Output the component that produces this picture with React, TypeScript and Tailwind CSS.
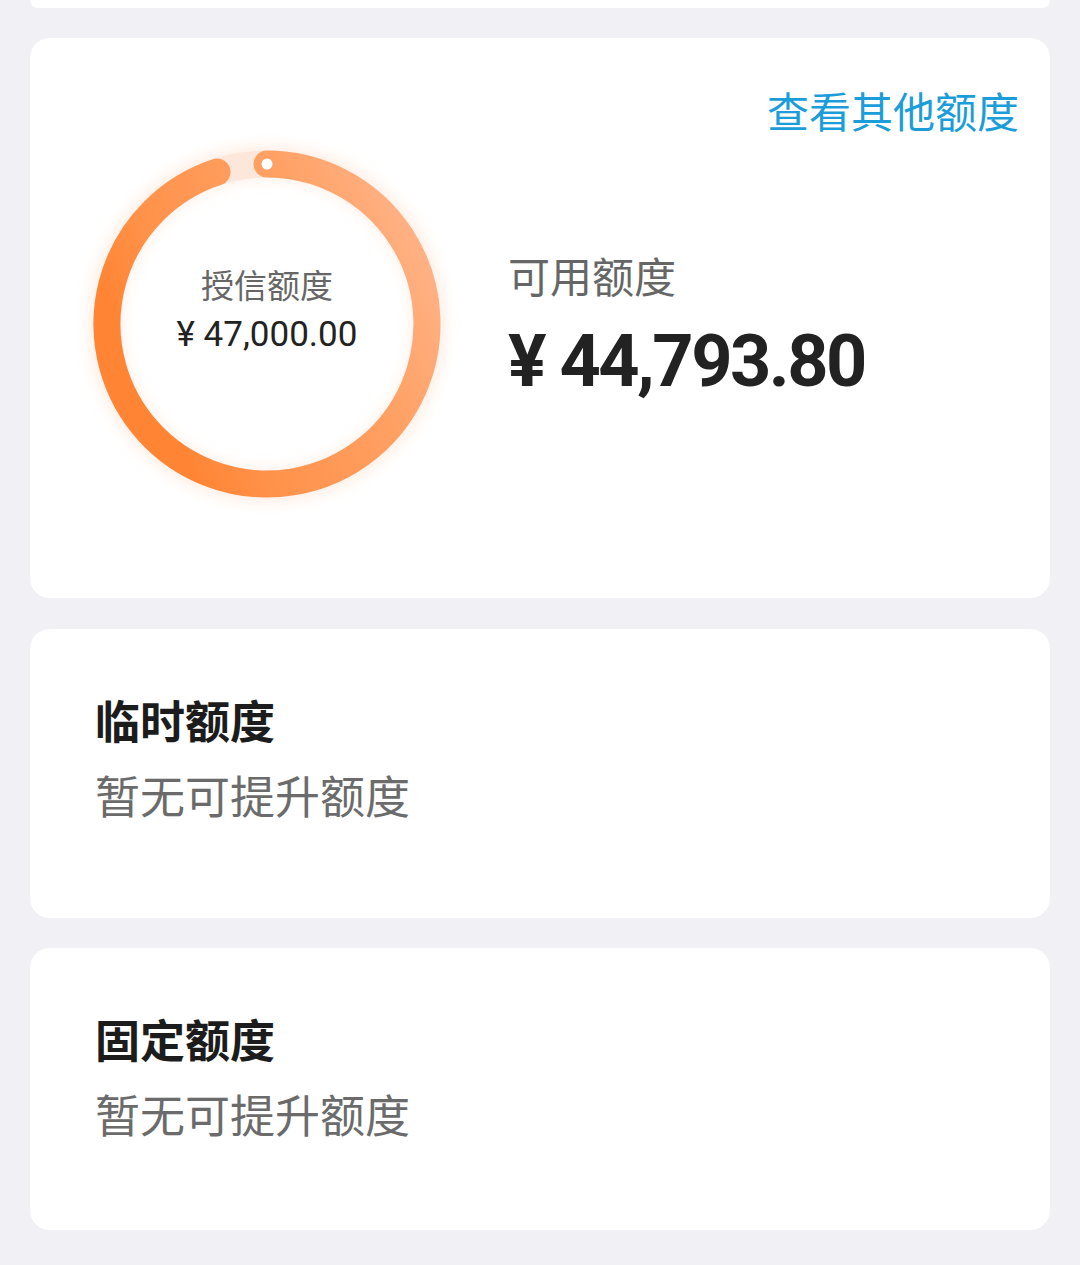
const cjk = "font-['Noto_Sans_CJK_SC',sans-serif]";
const num = "font-['Roboto','Noto_Sans_CJK_SC',sans-serif]";

function QuotaRing() {
  // arc from top (0deg) clockwise to ~341.8deg, r=160 around (190,190)
  return (
    <div className="relative w-[380px] h-[380px] ml-[47px] shrink-0">
      <svg className="absolute inset-0" width="380" height="380" viewBox="0 0 380 380">
        <defs>
          <linearGradient id="ring" gradientUnits="userSpaceOnUse" x1="330" y1="40" x2="40" y2="180">
            <stop offset="0" stopColor="#ffb48a" />
            <stop offset="0.35" stopColor="#ffa165" />
            <stop offset="0.8" stopColor="#ff924a" />
            <stop offset="1" stopColor="#ff8535" />
          </linearGradient>
          <filter id="glow" x="-20%" y="-20%" width="140%" height="140%">
            <feGaussianBlur stdDeviation="7" />
          </filter>
        </defs>
        <circle cx="190" cy="190" r="162" fill="none" stroke="#ffd8bd" strokeOpacity="0.4" strokeWidth="34" filter="url(#glow)" />
        <circle cx="190" cy="190" r="160" fill="none" stroke="#fde7db" strokeWidth="27" />
        <path
          d="M 190 30 A 160 160 0 1 1 140.03 38.0"
          fill="none"
          stroke="url(#ring)"
          strokeWidth="27"
          strokeLinecap="round"
        />
        <circle cx="190" cy="30" r="5.5" fill="#ffffff" />
      </svg>
      <div className="relative h-full flex flex-col items-center justify-center pb-[30px]">
        <div className={`${cjk} text-[33px] leading-[40px] text-[#666666]`}>授信额度</div>
        <div className={`${num} mt-[11px] text-[35px] leading-[40px] text-[#222222]`}>¥ 47,000.00</div>
      </div>
    </div>
  );
}

function EmptyQuota({ title, height }: { title: string; height: string }) {
  return (
    <div className={`mx-[30px] bg-white rounded-[20px] pl-[65px] pt-[63px] ${height}`}>
      <div className={`${cjk} text-[45px] leading-[56px] font-bold text-[#1c1c1c]`}>{title}</div>
      <div className={`${cjk} mt-[19px] text-[45px] leading-[56px] text-[#6b6b6b]`}>暂无可提升额度</div>
    </div>
  );
}

export default function App() {
  return (
    <div className="w-[1080px] h-[1265px] bg-[#f1f0f5] overflow-hidden">
      <div className="mx-[30px] h-2 bg-white rounded-b-[10px]" />

      <div className="mx-[30px] mt-[30px] h-[560px] bg-white rounded-[20px] pt-[48px]">
        <div className="flex justify-end pr-[31px]">
          <span className={`${cjk} text-[42px] leading-[48px] text-[#1b9dd9]`}>查看其他额度</span>
        </div>
        <div className="flex items-start">
          <QuotaRing />
          <div className="ml-[51px] mt-[117px]">
            <div className={`${cjk} text-[42px] leading-[48px] text-[#666666]`}>可用额度</div>
            <div className={`${num} mt-[27px] text-[72px] leading-[72px] font-bold tracking-[-2.5px] text-[#222222]`}>
              ¥ 44,793.80
            </div>
          </div>
        </div>
      </div>

      <div className="mt-[31px]">
        <EmptyQuota title="临时额度" height="h-[289px]" />
      </div>
      <div className="mt-[30px]">
        <EmptyQuota title="固定额度" height="h-[282px]" />
      </div>
    </div>
  );
}
